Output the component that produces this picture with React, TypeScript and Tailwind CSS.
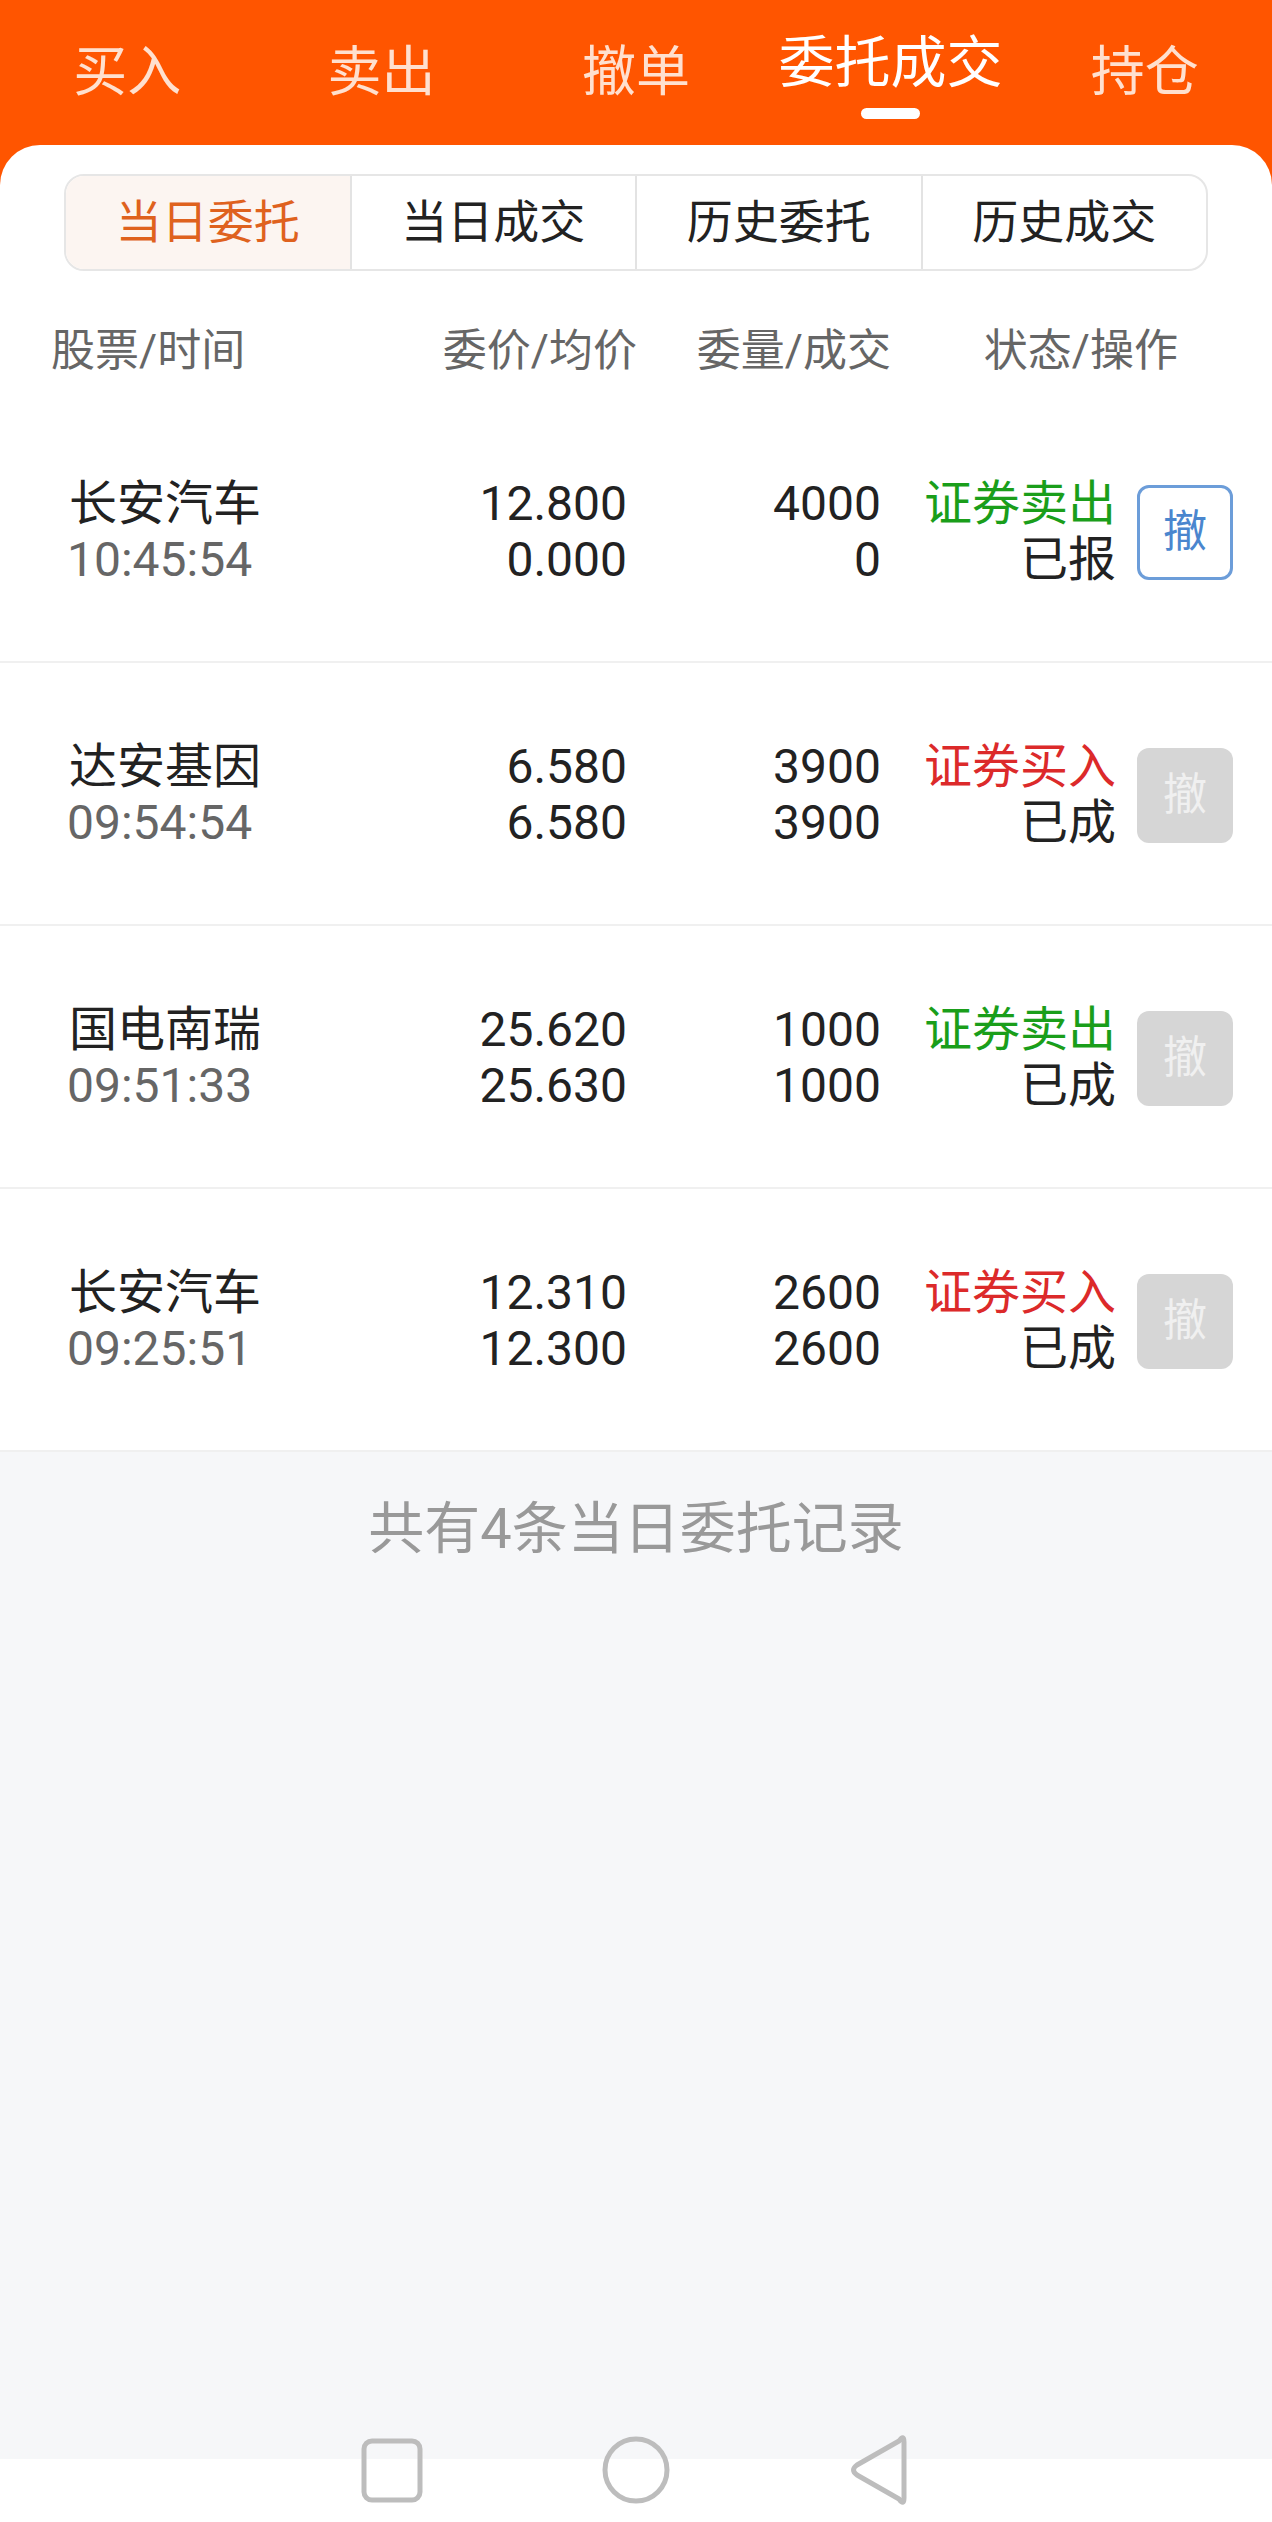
import React from "react";

type Row = {
  name: string;
  time: string;
  price: string;
  avg: string;
  qty: string;
  done: string;
  side: "sell" | "buy";
  status: string;
  active: boolean;
};

const rows: Row[] = [
  { name: "长安汽车", time: "10:45:54", price: "12.800", avg: "0.000", qty: "4000", done: "0", side: "sell", status: "已报", active: true },
  { name: "达安基因", time: "09:54:54", price: "6.580", avg: "6.580", qty: "3900", done: "3900", side: "buy", status: "已成", active: false },
  { name: "国电南瑞", time: "09:51:33", price: "25.620", avg: "25.630", qty: "1000", done: "1000", side: "sell", status: "已成", active: false },
  { name: "长安汽车", time: "09:25:51", price: "12.310", avg: "12.300", qty: "2600", done: "2600", side: "buy", status: "已成", active: false },
];

const topTabs = ["买入", "卖出", "撤单", "委托成交", "持仓"];
const subTabs = ["当日委托", "当日成交", "历史委托", "历史成交"];

export default function App() {
  return (
    <div className="relative w-[1272px] h-[2522px] flex flex-col bg-[#FF5500] font-['Roboto','Noto_Sans_CJK_SC',sans-serif] overflow-hidden">
      {/* top tabs */}
      <div className="h-[145px] grid grid-cols-5">
        {topTabs.map((t, i) =>
          i === 3 ? (
            <div key={t} className="flex flex-col items-center pt-[35px]">
              <span className="text-[56px] leading-[56px] text-white whitespace-nowrap">{t}</span>
              <span className="mt-[17px] w-[59px] h-[11px] rounded-full bg-white" />
            </div>
          ) : (
            <div key={t} className="flex flex-col items-center pt-[46px]">
              <span className="text-[54px] leading-[54px] text-[#FFE0CF] whitespace-nowrap">{t}</span>
            </div>
          )
        )}
      </div>

      {/* card */}
      <div className="flex-1 flex flex-col bg-white rounded-t-[40px] overflow-hidden">
        {/* segmented control */}
        <div className="pt-[29px] px-[64px]">
          <div className="h-[97px] flex rounded-[20px] border-2 border-[#E6E6E6] overflow-hidden">
            {subTabs.map((t, i) => (
              <div
                key={t}
                className={
                  i === 0
                    ? "flex-1 flex items-center justify-center bg-[#FCF5F1] text-[#DF621E] text-[46px]"
                    : "flex-1 flex items-center justify-center border-l-2 border-[#E3E3E3] text-[#222222] text-[46px]"
                }
              >
                {t}
              </div>
            ))}
          </div>
        </div>

        {/* header */}
        <div className="h-[129px] pt-[30px] flex items-center text-[44px] text-[#666666] whitespace-nowrap">
          <div className="pl-[51px] w-[437px]">股票/时间</div>
          <div className="w-[200px] text-right">委价/均价</div>
          <div className="w-[254px] text-right">委量/成交</div>
          <div className="w-[287px] text-right">状态/操作</div>
        </div>

        {/* rows */}
        {rows.map((r, i) => (
          <div key={i} className="h-[263px] pt-[3px] flex items-center border-b-2 border-[#F0F0F0] text-[48px] leading-[56px] whitespace-nowrap">
            <div className="pl-[67px] w-[466px] flex flex-col">
              <span className="text-[#222222] pl-[2px]">{r.name}</span>
              <span className="text-[#666666]">{r.time}</span>
            </div>
            <div className="w-[161px] flex flex-col items-end text-[#222222]">
              <span>{r.price}</span>
              <span>{r.avg}</span>
            </div>
            <div className="w-[254px] flex flex-col items-end text-[#222222]">
              <span>{r.qty}</span>
              <span>{r.done}</span>
            </div>
            <div className="w-[235px] flex flex-col items-end">
              <span className={r.side === "sell" ? "text-[#1A9E1A]" : "text-[#DC2A2A]"}>
                {r.side === "sell" ? "证券卖出" : "证券买入"}
              </span>
              <span className="text-[#222222]">{r.status}</span>
            </div>
            <div className="ml-[21px]">
              {r.active ? (
                <div className="w-[96px] h-[95px] rounded-[12px] border-[3px] border-[#6C9DD9] flex items-center justify-center text-[44px] text-[#4A86CE]">
                  撤
                </div>
              ) : (
                <div className="w-[96px] h-[95px] rounded-[12px] bg-[#D6D6D6] flex items-center justify-center text-[44px] text-[#F0F0F0]">
                  撤
                </div>
              )}
            </div>
          </div>
        ))}

        {/* footer */}
        <div className="flex-1 bg-[#F6F7F9] flex flex-col">
          <div className="pt-[42px] text-center text-[56px] leading-[70px] text-[#999999]">共有4条当日委托记录</div>
        </div>
        <div className="h-[63px] bg-white" />
      </div>

      {/* system nav overlay */}
      <svg
        className="absolute left-0 bottom-0"
        width="1272"
        height="100"
        viewBox="0 0 1272 100"
        fill="none"
        stroke="#BDBDBD"
        strokeWidth="5"
      >
        <rect x="364" y="19" width="56" height="59" rx="8" />
        <circle cx="636" cy="48" r="31" />
        <path d="M904 20 L904 76 Q904 84 899 77 L857 53 Q850 48 857 43 L899 19 Q904 12 904 20 Z" strokeLinejoin="round" />
      </svg>
    </div>
  );
}
